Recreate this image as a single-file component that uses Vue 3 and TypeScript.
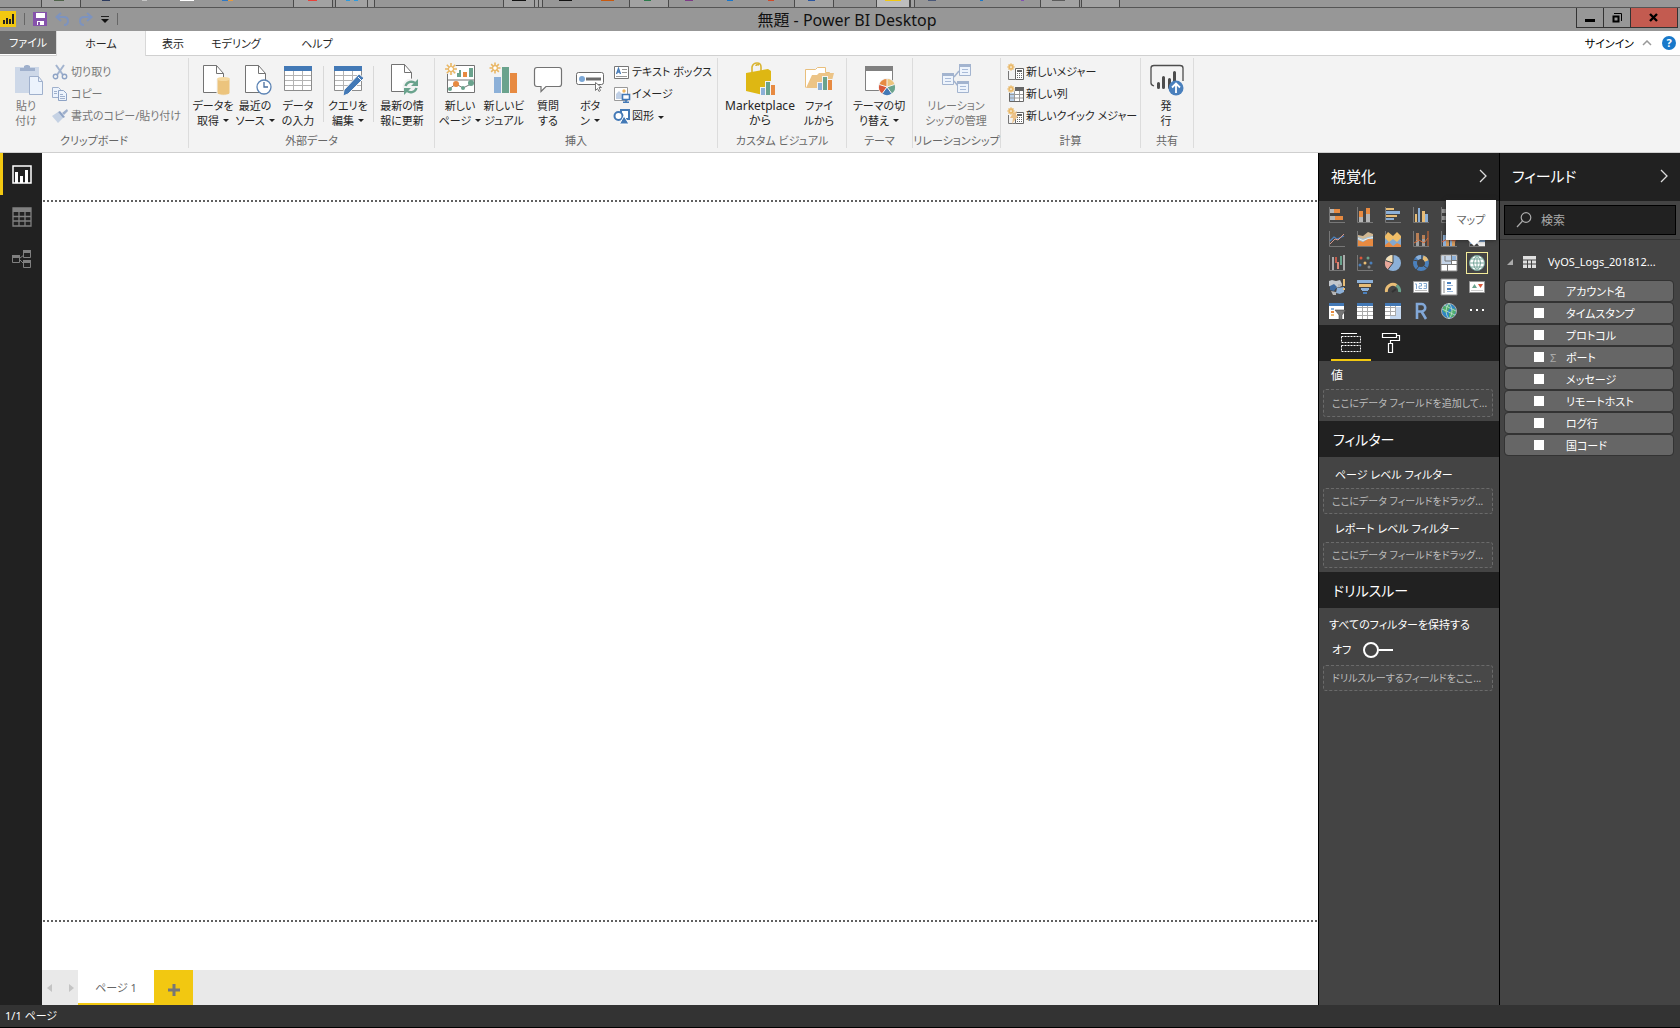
<script setup lang="ts">
import { ref } from 'vue'

interface BigCommand {
  icon: string
  lines: string[]
  width: number
  menu?: boolean
  disabled?: boolean
  divider?: boolean
  latin?: boolean
}
interface SmallCommand {
  icon: string
  label: string
  menu?: boolean
  disabled?: boolean
}
interface Group {
  label: string
  width: number
  big: BigCommand[]
  small: SmallCommand[]
}

const sun = (x: number, y: number, r: number) =>
  `<g stroke="#e9b765" stroke-width="1.6" transform="translate(${x} ${y})"><path d="M0 ${-r}V${r}M${-r} 0H${r}M${-r * 0.7} ${-r * 0.7}L${r * 0.7} ${r * 0.7}M${r * 0.7} ${-r * 0.7}L${-r * 0.7} ${r * 0.7}"/><circle r="${r * 0.42}" fill="#fff" stroke-width="1.2"/></g>`

const pageShape = (x: number, y: number) =>
  `<path d="M${x + 0.5} ${y + 0.5}h13l7 8v19h-20z" fill="#fff" stroke="#737373"/><path d="M${x + 13.5} ${y + 0.5}v8h7" fill="none" stroke="#737373"/>`

const tableShape =
  '<path d="M6.5 4.5h27v24h-27z" fill="#fff" stroke="#8c8c8c"/><path d="M6 4h28v5H6z" fill="#4379b6"/><path d="M7 13.5h26M7 18.5h26M7 23.5h26M15.5 9v19M24.5 9v19" stroke="#b3b3b3" fill="none"/>'

const relBox = (x: number, y: number) =>
  `<path d="M${x + 0.5} ${y + 0.5}h11v11h-11z" fill="#eef4fc" stroke="#a3b4cf"/><path d="M${x} ${y}h12v3h-12z" fill="#a3b4cf"/><path d="M${x + 3} ${y + 5.5}h6M${x + 3} ${y + 8.5}h6" stroke="#a9bbd8"/>`

const bigIcons: Record<string, string> = {
  paste:
    '<path d="M9 5h24v26H9z" fill="#cdd8e8"/><path d="M14 9V6h4V4l2-1h2l2 1v2h5v3z" fill="#9fb0cc"/><path d="M23.5 14.5h9l4 5v13h-13z" fill="#ecf3fc" stroke="#9fb0cc"/><path d="M32.500 14.500v5h4" fill="none" stroke="#9fb0cc"/>',
  getData:
    pageShape(10, 3) +
    '<path d="M24 17v14c0 3 13 3 13 0V17z" fill="#ecc47d" stroke="#f3f3f3"/><ellipse cx="30.500" cy="17" rx="6.500" ry="2" fill="#f5d9a0"/>',
  recent:
    pageShape(10, 3) +
    '<circle cx="29" cy="25" r="7" fill="#fff" stroke="#5c84b5" stroke-width="1.300"/><path d="M29 20v5h4" fill="none" stroke="#4a6f9e" stroke-width="1.300"/>',
  table: tableShape,
  query:
    tableShape +
    '<path d="M31 12l5 4-16 16-5 2 1-6z" fill="#4379b6" stroke="#f3f3f3"/><path d="M30 15l4 4" stroke="#fff"/>',
  refresh:
    pageShape(9, 2) +
    '<circle cx="29" cy="25" r="8.500" fill="#f3f3f3"/><path d="M23.500 24a6 6 0 0 1 10-2.500M34.500 26a6 6 0 0 1-10 2.500" fill="none" stroke="#6aa38d" stroke-width="2.400"/><path d="M36 17v7h-7zM22 33v-7h7z" fill="#6aa38d"/>',
  newPage:
    '<path d="M7.500 3.500h27v27h-27zM7.500 18h27" fill="#fff" stroke="#737373"/><path d="M17 11h3v4h-3zM29 6h4v9h-4z" fill="#6aa38d"/><path d="M23 10h4v5h-4z" fill="#e78a41"/><path d="M19 8h2v7h-2z" fill="#6aa38d"/><path d="M9 27l7-5 7 4 8-4" fill="none" stroke="#777"/><circle cx="16" cy="22" r="3" fill="#e78a41"/><circle cx="31" cy="21" r="3" fill="#6aa38d"/><circle cx="10" cy="27" r="2" fill="#6aa38d"/><circle cx="23" cy="26" r="2" fill="#6aa38d"/><circle cx="11" cy="7" r="6" fill="#f3f3f3"/>' +
    sun(11, 7, 6),
  newVisual:
    '<path d="M10 15h7v16h-7z" fill="#8cb0d8"/><path d="M18 5h7v26h-7z" fill="#6aa38d"/><path d="M26 11h7v20h-7z" fill="#e78a41"/>' +
    sun(11, 6, 5.5),
  ask: '<path d="M9 5.500h22q2.500 0 2.500 2.500v14q0 2.500-2.500 2.500H18l-5 5v-5H9q-2.500 0-2.500-2.500V8q0-2.500 2.500-2.500z" fill="#fff" stroke="#737373" stroke-width="1.200"/>',
  button:
    '<rect x="6.500" y="10.500" width="27" height="12" rx="2" fill="#fff" stroke="#6b6b6b"/><circle cx="12" cy="17" r="3" fill="#7ba7d6"/><path d="M16 15.500h15v3H16z" fill="#6b6b6b"/><path d="M25.500 20.500v8l2-2 1.500 3 1.500-1-1.500-3h2.500z" fill="#fff" stroke="#777"/>',
  market:
    '<path d="M12 10V5q1-4 5-4t4 4v4M16 4q0-2 3-1" fill="none" stroke="#d9b431" stroke-width="1.600"/><path d="M6 11l22-4 3 2v20l-8 4L6 29z" fill="#deb713"/><path d="M20 25h5v9h-5zM25 19h6v15h-6zM30 22h6v12h-6z" fill="#f3f3f3"/><path d="M21 26h4v7h-4z" fill="#8cb0d8"/><path d="M26 20h4v13h-4z" fill="#6aa38d"/><path d="M31 23h4v10h-4z" fill="#e78a41"/>',
  folder:
    '<path d="M6.500 25.500v-18h10l2-2h8v5h4v3" fill="#fff" stroke="#e9bf7c"/><path d="M7 26l6-13h5l2-2h15l-4 15z" fill="#ecc487"/><path d="M18 20h6v9h-6zM23 14h6v15h-6zM28 17h6v12h-6z" fill="#f3f3f3"/><path d="M19 21h4v7h-4z" fill="#8cb0d8"/><path d="M24 15h4v13h-4z" fill="#6aa38d"/><path d="M29 18h4v10h-4z" fill="#e78a41"/>',
  theme:
    '<path d="M6.500 4.500h27v24h-27z" fill="#fff" stroke="#808080"/><path d="M6 4h28v5H6z" fill="#808080"/><circle cx="28" cy="25" r="9" fill="#f3f3f3"/><path d="M28 25v-8a8 8 0 0 0-7.600 5.500z" fill="#e78a41"/><path d="M28 25v-8a8 8 0 0 1 7.600 5.500z" fill="#ecc47d"/><path d="M28 25l7.600-2.500A8 8 0 0 1 32.700 31.500z" fill="#6aa38d"/><path d="M28 25l4.700 6.500a8 8 0 0 1-9.400 0z" fill="#4379b6"/><path d="M28 25l-4.700 6.500A8 8 0 0 1 20.400 22.500z" fill="#d9583b"/><path d="M28 17v8l7.600-2.500M28 25l4.700 6.500M28 25l-4.700 6.500M28 25l-7.600-2.500" fill="none" stroke="#f3f3f3"/>',
  relations:
    '<path d="M18 15l5-6M18 19l4 5" stroke="#a3b4cf" stroke-width="1.500"/>' + relBox(6, 11) + relBox(23, 2) + relBox(21, 19),
  publish:
    '<path d="M8 24q-3-1-3-3V6q0-2.500 3-2.500h26q3 0 3 2.500v13" fill="none" stroke="#4d4d4d" stroke-width="1.300"/><path d="M12.500 21.500v4M17.500 15.500v10M23.500 17.500v8M28.500 10.500v10" stroke="#4d4d4d" stroke-width="3" stroke-linecap="round"/><circle cx="30" cy="26" r="7.500" fill="#4a80bd"/><path d="M30 31v-9M26 25.500l4-4 4 4" fill="none" stroke="#fff" stroke-width="1.800"/>',
}

const calcShape = '<path d="M1.500 8v8.500H8" fill="none" stroke="#777"/><path d="M8.500 5.500h8v11h-8z" fill="#fff" stroke="#666"/><path d="M10 7h5v2h-5zM10 10h1v1h-1zM12 10h1v1h-1zM14 10h1v1h-1zM10 12h1v1h-1zM12 12h1v1h-1zM14 12h1v1h-1zM10 14h1v1h-1zM12 14h1v1h-1zM14 14h1v1h-1z" fill="#666"/>'

const smallIcons: Record<string, string> = {
  cut: '<path d="M4 2l7 10M12 2L5 12" stroke="#a3b4cf" stroke-width="2"/><circle cx="3.500" cy="13.500" r="2.200" fill="none" stroke="#8ea3c5" stroke-width="1.400"/><circle cx="12.500" cy="13.500" r="2.200" fill="none" stroke="#8ea3c5" stroke-width="1.400"/>',
  copy: '<path d="M.5 2.500h6l2 2v8h-8z" fill="#ecf3fc" stroke="#9fb0cc"/><path d="M6.500 5.500h5l3 3v7h-8z" fill="#ecf3fc" stroke="#8ea3c5"/><path d="M2 6.500h3M2 8.500h3M8 9.500h3M8 11.500h5M8 13.500h5" stroke="#9fb0cc"/>',
  brush: '<path d="M0 9l6-4 5 6-5 5z" fill="#c5d2e4"/><path d="M6 5l2-1 5 6-2 1z" fill="#8ea3c5"/><path d="M10 6l5-4 1 2-4 4z" fill="#9fb0cc"/>',
  textBox: '<path d="M1.500 3.500h14v12h-14z" fill="#fff" stroke="#777"/><path d="M3.500 11l2-5.500 2 5.500M4.500 9h2" fill="none" stroke="#4379b6" stroke-width="1.300"/><path d="M9 6.500h5M9 9.500h5M3 13.500h11" stroke="#999"/>',
  image: '<path d="M1.500 2.500h13v13h-13z" fill="#fff" stroke="#999"/><circle cx="11" cy="6" r="1.700" fill="#ecb55e"/><path d="M3 14V9l3-3 3 3v5z" fill="#c0d0e6"/><path d="M9.500 9.500h7v5h-7z" fill="#fff" stroke="#4379b6" stroke-width="1.600"/><path d="M10 17.300h6M13 15v2" stroke="#4379b6" stroke-width="1.600"/>',
  shapes: '<path d="M8 3h8v9H8z" fill="#fff" stroke="#4379b6" stroke-width="2"/><circle cx="5.500" cy="9" r="4" fill="#fff" stroke="#4379b6" stroke-width="2"/><path d="M6.500 17l4.500-8 5 8z" fill="#4379b6" stroke="#fff"/>',
  measure: calcShape + sun(4, 4, 3.5),
  column: '<path d="M2.500 5.500h14v11h-14z" fill="#fff" stroke="#666"/><path d="M8 2h9v4H8z" fill="#666"/><path d="M3 8h4v8H3z" fill="#b9d0ea"/><path d="M7.500 6v10M12.500 6v10M3 9.500h13M3 13h13" stroke="#999"/><circle cx="4" cy="4" r="4" fill="#f3f3f3"/>' + sun(4, 4, 3.5),
  quick: calcShape + '<path d="M6 6l4-2-1 4 2 1-6 8 1-6H3z" fill="#ecc28a"/>' + sun(4, 4, 3.5),
}

const groups: Group[] = [
  {
    label: 'クリップボード', width: 189,
    big: [{ icon: 'paste', lines: ['貼り', '付け'], width: 46, disabled: true }],
    small: [
      { icon: 'cut', label: '切り取り', disabled: true },
      { icon: 'copy', label: 'コピー', disabled: true },
      { icon: 'brush', label: '書式のコピー/貼り付け', disabled: true },
    ],
  },
  {
    label: '外部データ', width: 246,
    big: [
      { icon: 'getData', lines: ['データを', '取得'], width: 42, menu: true },
      { icon: 'recent', lines: ['最近の', 'ソース'], width: 42, menu: true },
      { icon: 'table', lines: ['データ', 'の入力'], width: 44 },
      { icon: 'query', lines: ['クエリを', '編集'], width: 44, menu: true, divider: true },
      { icon: 'refresh', lines: ['最新の情', '報に更新'], width: 52, divider: true },
    ],
    small: [],
  },
  {
    label: '挿入', width: 283,
    big: [
      { icon: 'newPage', lines: ['新しい', 'ページ'], width: 44, menu: true },
      { icon: 'newVisual', lines: ['新しいビ', 'ジュアル'], width: 44 },
      { icon: 'ask', lines: ['質問', 'する'], width: 44 },
      { icon: 'button', lines: ['ボタ', 'ン'], width: 40, menu: true },
    ],
    small: [
      { icon: 'textBox', label: 'テキスト ボックス' },
      { icon: 'image', label: 'イメージ' },
      { icon: 'shapes', label: '図形', menu: true },
    ],
  },
  {
    label: 'カスタム ビジュアル', width: 129,
    big: [
      { icon: 'market', lines: ['Marketplace', 'から'], width: 78, latin: true },
      { icon: 'folder', lines: ['ファイ', 'ルから'], width: 40 },
    ],
    small: [],
  },
  { label: 'テーマ', width: 66, big: [{ icon: 'theme', lines: ['テーマの切', 'り替え'], width: 58, menu: true }], small: [] },
  { label: 'リレーションシップ', width: 88, big: [{ icon: 'relations', lines: ['リレーション', 'シップの管理'], width: 80, disabled: true }], small: [] },
  {
    label: '計算', width: 140, big: [],
    small: [
      { icon: 'measure', label: '新しいメジャー' },
      { icon: 'column', label: '新しい列' },
      { icon: 'quick', label: '新しいクイック メジャー' },
    ],
  },
  { label: '共有', width: 53, big: [{ icon: 'publish', lines: ['発', '行'], width: 44 }], small: [] },
]

const tabs = [
  { label: 'ファイル', width: 56, kind: 'file' },
  { label: 'ホーム', width: 90, kind: 'active' },
  { label: '表示', width: 54, kind: '' },
  { label: 'モデリング', width: 72, kind: '' },
  { label: 'ヘルプ', width: 90, kind: '' },
]

const axis = '<path d="M1.500 1v15.500H17" fill="none" stroke="#777"/>'
const sheet = '<path d="M1 1h16v16H1z" fill="#fff" stroke="#888"/>'
const grid = '<path d="M1 1h16v16H1z" fill="#fff"/><path d="M1 5.500h16M1 9.500h16M1 13.500h16M6.500 4v13M11.500 4v13" stroke="#aaa"/>'

const visuals: { name: string; art: string }[] = [
  { name: '積み上げ横棒グラフ', art: axis + '<path d="M2 3h4v4H2zM2 10h5v4H2z" fill="#b5b5b5"/><path d="M6 3h6v4H6zM7 10h8v4H7z" fill="#e78a41"/>' },
  { name: '積み上げ縦棒グラフ', art: axis + '<path d="M3 11h4v5H3zM10 8h4v8h-4z" fill="#b5b5b5"/><path d="M3 5h4v6H3zM10 2h4v6h-4z" fill="#e78a41"/>' },
  { name: '集合横棒グラフ', art: axis + '<path d="M2 2h8v2H2zM2 9h11v2H2z" fill="#e8bd76"/><path d="M2 5h14v3H2zM2 12h8v2H2z" fill="#8cb0d8"/>' },
  { name: '集合縦棒グラフ', art: axis + '<path d="M3 8h2v8H3zM10 5h3v11h-3z" fill="#e8bd76"/><path d="M6 2h2v14H6zM13 8h3v8h-3z" fill="#8cb0d8"/>' },
  { name: '100% 積み上げ横棒グラフ', art: axis + '<path d="M2 3h14v4H2zM2 10h14v4H2z" fill="#9a9a9a"/>' },
  { name: '100% 積み上げ縦棒グラフ', art: axis + '<path d="M4 2h4v14H4zM11 2h4v14h-4z" fill="#9a9a9a"/>' },
  { name: '折れ線グラフ', art: axis + '<path d="M2 11l4-4 3 2 7-3" fill="none" stroke="#4a7fbb" stroke-width="1.300"/><path d="M2 14l5-5 3 1 6-6" fill="none" stroke="#d9988a"/>' },
  { name: '面グラフ', art: axis + '<path d="M2 5l5 1 5-4 5 2v12H2z" fill="#d1b893"/><path d="M2 7l5 2 5-2 5-1v10H2z" fill="#9cc3e3"/><path d="M2 10l5 2 5-3 5 0v7H2z" fill="#e78a41"/><path d="M2 8.500l5 2 5-2 5-1" fill="none" stroke="#f7ebdb"/>' },
  { name: '積み上げ面グラフ', art: axis + '<path d="M1 6l3-4 5 4 4-4 4 4v11H1z" fill="#efbd68"/><path d="M1 8l4 4 4-3 4 3 4-4v9H1z" fill="#82a8d0"/><path d="M1 15l4-3 4 4 4-3 4 2v2H1z" fill="#e78a41"/>' },
  { name: '折れ線と積み上げ縦棒', art: axis + '<path d="M4 3h3v8H4zM10 5h3v6h-3z" fill="#b97f55"/><path d="M4 10h3v6H4zM10 9h3v7h-3z" fill="#a0a0a0"/><path d="M16 1v15M2 13l5-3 5 3 4-5" fill="none" stroke="#d96c35"/>' },
  { name: '折れ線と集合縦棒', art: axis + '<path d="M3 5h3v11H3zM10 8h2v8h-2z" fill="#8cb0d8"/><path d="M6 8h3v8H6zM12 4h3v12h-3z" fill="#d69b5e"/><path d="M2 12l5-3 9 2" fill="none" stroke="#d9583b"/>' },
  { name: 'リボン グラフ', art: axis + '<path d="M2 10h4l6 6h5V9h-4l-4 5H2z" fill="#7399c3"/><path d="M2 5h4l5 7h6v4h-6L6 9H2z" fill="#eee"/>' },
  { name: 'ウォーターフォール図', art: axis + '<path d="M4 3h2v13H4z" fill="#aaa"/><path d="M7 3h2v6H7z" fill="#c35a49"/><path d="M9 8h2v7H9z" fill="#d98a7c"/><path d="M12 2h2v9h-2z" fill="#6aa38d"/><path d="M15 1h2v15h-2z" fill="#aaa"/>' },
  { name: '散布図', art: axis + '<g fill="#d9583b"><circle cx="5" cy="4" r="1.500"/><circle cx="13" cy="13" r="1.500" fill="#888"/><circle cx="4" cy="11" r="1.500" fill="#4a7fbb"/><circle cx="9" cy="9" r="1.500" fill="#e8bd76"/><circle cx="12" cy="4" r="1.500" fill="#6aa38d"/><circle cx="15" cy="9" r="1.500" fill="#4a7fbb"/></g>' },
  { name: '円グラフ', art: '<circle cx="9" cy="9" r="8" fill="#8cb0d8"/><path d="M9 9V1a8 8 0 0 0-7.500 5.500z" fill="#f4dfb5"/><path d="M9 9L1.500 6.500A8 8 0 0 0 4 15.500z" fill="#e8a79a"/><path d="M9 1v8l-7.500-2.500M9 9l-5 6.500" fill="none" stroke="#444"/>' },
  { name: 'ドーナツ グラフ', art: '<circle cx="9" cy="9" r="6" fill="none" stroke="#4a80bd" stroke-width="4"/><path d="M9 3a6 6 0 0 0-4 1.500" fill="none" stroke="#8cb0d8" stroke-width="4"/><path d="M11 3.400a6 6 0 0 1 3.600 3.600" fill="none" stroke="#e8bd76" stroke-width="4"/><path d="M10 0v6M1 6l5 1M4 16l3-4M12 12l4 3" stroke="#444"/>' },
  { name: 'ツリーマップ', art: sheet + '<path d="M2 2h9v8H2z" fill="#c4d4e8"/><path d="M12 2h4v4h-4z" fill="#8cb0d8"/><path d="M11.500 1v10M1 10.500h16M7.500 10.500V17M12 6.500h5M5 2v5h6" stroke="#777" fill="none"/>' },
  { name: 'マップ', art: '<circle cx="9" cy="9" r="7.500" fill="#fff" stroke="#77a69b"/><path d="M1.500 9h15M3 5h12M3 13h12M9 1v16M9 1Q2 9 9 17M9 1q7 8 0 16" fill="none" stroke="#77a69b"/>' },
  { name: '塗り分け地図', art: '<path d="M1 3l3-1 4 1 4-1 2 4-2 3-5 1-6-2z" fill="#c4c8cd"/><path d="M2 8l4-2 3 3-3 4-4-1z" fill="#3f6a9f"/><path d="M9 10l7-1v5l-4 2-4-1z" fill="#8cb0d8"/><path d="M3 13l5 1v3H5zM10 6l4 0v2l-4 1z" fill="#b5b5b5"/><path d="M16 1v7M16 10v2" stroke="#e8bd76" stroke-width="2"/>' },
  { name: 'じょうご', art: '<path d="M1 2h16v3H1zM5 10h8v2H5z" fill="#8cb0d8"/><path d="M3 6h12v3H3z" fill="#e8bd76"/><path d="M6 12h6v1H6z" fill="#8cb0d8"/><path d="M7 14h4v2H7z" fill="#4a80bd"/>' },
  { name: 'ゲージ', art: '<path d="M2.500 14a6.500 6.500 0 0 1 10-6.500" fill="none" stroke="#e8bd76" stroke-width="3"/><path d="M12.500 7.500a6.500 6.500 0 0 1 3 6.500" fill="none" stroke="#6aa38d" stroke-width="3"/><path d="M8 14l4-3" stroke="#333" stroke-width="2"/>' },
  { name: 'カード', art: '<path d="M1.500 3.500h15v11h-15z" fill="#fff" stroke="#999"/><path d="M3 6h1.500v5M7 5.500h2.500v2.500H7v2.500h3M11.500 5.500h3v5h-3M12 8h2.500" fill="none" stroke="#82a8d0"/><path d="M3 12.500h12" stroke="#bbb"/>' },
  { name: '複数の行カード', art: sheet + '<path d="M3 3h2v12H3z" fill="#c5c5c5"/><path d="M7 4h4v2H7zM7 10h4v2H7z" fill="#4a80bd"/><path d="M7 7.500h6M7 13.500h6" stroke="#9cb9da"/>' },
  { name: 'KPI', art: '<path d="M1.500 3.500h15v11h-15z" fill="#fff" stroke="#999"/><path d="M4 10l2.500-4L9 10z" fill="#6aa38d"/><path d="M10 6h5l-2.500 4z" fill="#d9583b"/><path d="M3 12.500h12" stroke="#ccc"/>' },
  { name: 'スライサー', art: '<path d="M1 1h15v16H1z" fill="#fff"/><path d="M1 1h15v3H1z" fill="#4379b6"/><path d="M3 6h3v2H3z" fill="#8cb0d8"/><path d="M3 9h3v2H3z" fill="#e78a41"/><path d="M3 12h3v2H3z" fill="#f0c080"/><path d="M7 8h11l-4 5v5l-3-1v-4z" fill="#777" stroke="#444" stroke-width=".6"/>' },
  { name: 'テーブル', art: grid + '<path d="M1 1h16v3H1z" fill="#4379b6"/>' },
  { name: 'マトリックス', art: grid + '<path d="M12 5h5v12h-5zM6 14h6v3H6z" fill="#c4d7ee"/><path d="M1 1h16v3H1z" fill="#4379b6"/>' },
  { name: 'R スクリプト ビジュアル', art: '<path d="M5 17V2h4.500a3.700 3.700 0 0 1 0 7.500H5M9.500 9.500L14 17" fill="none" stroke="#82a8d8" stroke-width="2.600"/>' },
  { name: 'ArcGIS Maps', art: '<circle cx="9" cy="9" r="7.500" fill="#2f86c4" stroke="#aaa"/><path d="M3 5l6-3 1 4-4 5-3-2zM9 11l5-5 2 3-3 6-4 0z" fill="#4fae6a"/><path d="M2 7l13 6M4 3l12 6M9 1Q3 9 9 17M9 1q6 8 0 16" fill="none" stroke="#bfe0d0" stroke-width=".8"/>' },
  { name: 'その他のオプション', art: '<path d="M2 7h2v2H2zM8 7h2v2H8zM14 7h2v2h-2z" fill="#fff"/>' },
]

const fields = ['アカウント名', 'タイムスタンプ', 'プロトコル', 'ポート', 'メッセージ', 'リモートホスト', 'ログ行', '国コード']
const numeric = 'ポート'
const picked = ref<string[]>([])
const keepFilters = ref(false)
const query = ref('')

// Slivers of the desktop taskbar behind the window: frames, then icon edges.
const frames = [[41, 39], [293, 39], [335, 35], [367, 7], [503, 31], [534, 4], [538, 4], [629, 39], [794, 39], [910, 4], [1040, 39], [1081, 38]]
const bits: [number, number, string][] = [
  [54, 10, '#50634b'], [102, 8, '#2c3a5e'], [142, 5, '#c5c5c5'], [180, 14, '#fff'], [222, 6, '#2f78c4'], [228, 5, '#e89a3c'],
  [308, 9, '#e8423a'], [346, 4, '#2c9be0'], [354, 4, '#2c9be0'], [512, 14, '#111'], [559, 13, '#111'], [601, 13, '#c8590f'],
  [644, 7, '#2b7a4b'], [685, 8, '#7d3b86'], [727, 6, '#1876cc'], [768, 6, '#d04a2b'], [808, 7, '#2a55a0'],
  [885, 16, '#f2c811'], [928, 8, '#4a5878'], [980, 3, '#1b78c8'], [1021, 3, '#8250b4'], [1052, 13, '#5c5c5c'],
]
</script>

<template>
  <div class="app">
    <div class="desktop-strip" aria-hidden="true">
      <svg width="1200" height="8">
        <g fill="#a2a2a2" stroke="#4a4a4a">
          <rect v-for="f in frames" :key="f[0]" :x="f[0] + 0.5" y="-2" :width="f[1]" height="9.5" />
          <rect x="876.5" y="-2" width="33" height="9.5" fill="#bdbdbd" />
        </g>
        <rect v-for="b in bits" :key="b[0]" :x="b[0]" y="0" :width="b[1]" height="1" :fill="b[2]" />
      </svg>
    </div>

    <header class="titlebar">
      <div class="quick">
        <svg class="logo" width="16" height="16" viewBox="0 0 16 16"><path d="M0 0h16v16H0z" fill="#f2c811" /><path d="M4 9v4M7 7v6M10 8v5M13 3v10" stroke="#222" stroke-width="2" /></svg>
        <i></i>
        <button class="plain" aria-label="保存"><svg width="14" height="14" viewBox="0 0 14 14"><path d="M0 0h14v14H0z" fill="#8552ab" /><path d="M3 1h9v5H3zM4 9h7v4H4z" fill="#fff" /><path d="M5 10h2v3H5z" fill="#8552ab" /></svg></button>
        <button class="plain" aria-label="元に戻す"><svg width="15" height="14" viewBox="0 0 15 14"><path d="M6 1L1.500 5 6 9M2 5h7q4 0 4 4t-4 4" fill="none" stroke="#7d93be" stroke-width="2" /></svg></button>
        <button class="plain" aria-label="やり直し"><svg width="15" height="14" viewBox="0 0 15 14"><path d="M9 1l4.500 4L9 9M13 5H6q-4 0-4 4t4 4" fill="none" stroke="#7d93be" stroke-width="2" /></svg></button>
        <button class="plain" aria-label="カスタマイズ"><svg width="8" height="10" viewBox="0 0 8 10"><path d="M0 2h8v1H0z" fill="#222" /><path d="M0 5h8L4 9z" fill="#111" /></svg></button>
        <i></i>
      </div>
      <h1>無題 - Power BI Desktop</h1>
      <div class="window-buttons">
        <button aria-label="最小化"><svg width="12" height="12"><path d="M1 7h10v3H1z" /></svg></button>
        <button aria-label="元のサイズ"><svg width="12" height="12"><path d="M2.500 4.500h5v5h-5z" fill="none" stroke="#000" stroke-width="2" /><path d="M3 1.500h7.500V9" fill="none" stroke="#000" /></svg></button>
        <button class="close" aria-label="閉じる"><svg width="12" height="12"><path d="M2 2l7 7M9 2L2 9" stroke="#000" stroke-width="2.400" /></svg></button>
      </div>
    </header>

    <nav class="tabs">
      <button v-for="t in tabs" :key="t.label" :class="['tab', t.kind]" :style="{ width: t.width + 'px' }">{{ t.label }}</button>
      <div class="account">
        <button class="plain">サインイン</button>
        <svg width="10" height="6" viewBox="0 0 10 6"><path d="M1 5l4-4 4 4" fill="none" stroke="#999" stroke-width="1.500" /></svg>
        <button class="help" aria-label="ヘルプを表示">?</button>
      </div>
    </nav>

    <section class="ribbon">
      <div v-for="g in groups" :key="g.label" class="group" :style="{ width: g.width + 'px' }">
        <div class="commands">
          <template v-for="c in g.big" :key="c.icon">
            <i v-if="c.divider" class="divider"></i>
            <button :class="['big', { latin: c.latin }]" :disabled="c.disabled" :style="{ width: c.width + 'px' }">
              <svg width="40" height="34" viewBox="0 0 40 34" v-html="bigIcons[c.icon]"></svg>
              <span>{{ c.lines[0] }}</span>
              <span>{{ c.lines[1] }}<b v-if="c.menu" class="caret"></b></span>
            </button>
          </template>
          <div v-if="g.small.length" class="stack">
            <button v-for="s in g.small" :key="s.icon" class="small" :disabled="s.disabled">
              <svg width="18" height="18" viewBox="0 0 18 18" v-html="smallIcons[s.icon]"></svg>
              <span>{{ s.label }}</span><b v-if="s.menu" class="caret"></b>
            </button>
          </div>
        </div>
        <div class="group-label">{{ g.label }}</div>
      </div>
    </section>

    <main class="workspace">
      <nav class="views">
        <button class="on" aria-label="レポート"><svg width="20" height="20" viewBox="0 0 20 20"><path d="M1 1h18v17H1z" fill="none" stroke="#fff" stroke-width="1.500" /><path d="M3 7h3v11H3zM8 11h3v7H8zM13 5h3v13h-3z" fill="#fff" /></svg></button>
        <button aria-label="データ"><svg width="20" height="20" viewBox="0 0 20 20"><path d="M1 1h18v18H1zM1 9.500h18M1 14h18M7 5v14M13 5v14" fill="none" stroke="#808080" stroke-width="1.300" /><path d="M1 1h18v4H1z" fill="#808080" /></svg></button>
        <button aria-label="リレーションシップ"><svg width="20" height="20" viewBox="0 0 20 20"><path d="M.5 7.500h7v6h-7zM11.500 2.500h7v6h-7zM11.500 12.500h7v6h-7zM8 9l4-3M8 11l4 4" fill="none" stroke="#808080" /><path d="M0 6h8v3H0zM11 1h8v3h-8zM11 11h8v3h-8z" fill="#808080" /></svg></button>
      </nav>

      <div class="report">
        <div class="canvas"><div class="page"></div></div>
        <div class="page-tabs">
          <div class="arrows">
            <svg width="5" height="8"><path d="M5 0v8L0 4z" fill="#c4c4c4" /></svg>
            <svg width="5" height="8"><path d="M0 0v8l5-4z" fill="#c4c4c4" /></svg>
          </div>
          <button class="page-tab">ページ 1</button>
          <button class="add" aria-label="新しいページ"><svg width="12" height="12"><path d="M4.500 0h3v12h-3zM0 4.500h12v3H0z" fill="#777" /></svg></button>
        </div>
      </div>

      <aside class="pane">
        <h2 class="pane-head">視覚化<button class="plain" aria-label="視覚化を折りたたむ"><svg width="8" height="14"><path d="M1 1l6 6-6 6" fill="none" stroke="#ddd" stroke-width="1.300" /></svg></button></h2>
        <div class="gallery">
          <button v-for="v in visuals" :key="v.name" :class="{ hovered: v.name === 'マップ' }" :aria-label="v.name">
            <svg width="18" height="18" viewBox="0 0 18 18" v-html="v.art"></svg>
            <span v-if="v.name === 'マップ'" class="tooltip" role="tooltip">マップ</span>
          </button>
        </div>
        <div class="modes">
          <button class="on" aria-label="フィールド"><svg width="22" height="22" viewBox="0 0 22 22"><path d="M1 1.500h16" stroke="#fff" /><path d="M1.500 4.500h19v6h-19zM1.500 13.500h19v6h-19z" fill="none" stroke="#fff" stroke-dasharray="2 1" /></svg></button>
          <button aria-label="書式"><svg width="22" height="22" viewBox="0 0 22 22"><path d="M2.500 1.500h14v4h-14zM16.500 3.500h3v5h-9v3M8.500 11.500h4v9h-4z" fill="none" stroke="#fff" stroke-width="1.200" /></svg></button>
        </div>
        <div class="values">
          <h4>値</h4>
          <div class="well tall">ここにデータ フィールドを追加して...</div>
        </div>
        <h3>フィルター</h3>
        <div class="filters">
          <h4>ページ レベル フィルター</h4>
          <div class="well">ここにデータ フィールドをドラッグ...</div>
          <h4>レポート レベル フィルター</h4>
          <div class="well">ここにデータ フィールドをドラッグ...</div>
        </div>
        <h3>ドリルスルー</h3>
        <div class="drill">
          <h4>すべてのフィルターを保持する</h4>
          <label class="switch">オフ<input v-model="keepFilters" type="checkbox" role="switch" /></label>
          <div class="well">ドリルスルーするフィールドをここ...</div>
        </div>
      </aside>

      <aside class="pane">
        <h2 class="pane-head">フィールド<button class="plain" aria-label="フィールドを折りたたむ"><svg width="8" height="14"><path d="M1 1l6 6-6 6" fill="none" stroke="#ddd" stroke-width="1.300" /></svg></button></h2>
        <div class="search-row">
          <label class="search">
            <svg width="16" height="16" viewBox="0 0 16 16"><circle cx="10" cy="5.500" r="4.800" fill="none" stroke="#aaa" stroke-width="1.200" /><path d="M6.500 9L1 15" stroke="#aaa" stroke-width="1.200" /></svg>
            <input v-model="query" type="text" placeholder="検索" aria-label="検索" />
          </label>
        </div>
        <div class="table-name">
          <svg width="6" height="6"><path d="M6 0v6H0z" fill="#aaa" /></svg>
          <svg width="13" height="12"><path d="M0 0h13v12H0z" fill="#e0e0e0" /><path d="M0 4h13M0 8h13M4.500 4v8M8.500 4v8" stroke="#444" /></svg>
          <span>VyOS_Logs_201812...</span>
        </div>
        <ul class="fields">
          <li v-for="f in fields" :key="f">
            <label><input v-model="picked" type="checkbox" :value="f" /><i>{{ f === numeric ? 'Σ' : '' }}</i>{{ f }}</label>
          </li>
        </ul>
      </aside>
    </main>

    <footer class="status">1/1 ページ</footer>
  </div>
</template>

<style>
body {
  background: #000;
}
</style>

<style scoped>
* {
  box-sizing: border-box;
}
.app {
  display: flex;
  flex-direction: column;
  min-height: 100vh;
  font: 11px/15px "Noto Sans", "Noto Sans CJK JP", sans-serif;
  font-feature-settings: "palt";
  color: #262626;
  white-space: nowrap;
}
button,
input {
  font: inherit;
  font-feature-settings: inherit;
  color: inherit;
}
button {
  padding: 0;
  border: 0;
  background: none;
}
svg {
  display: block;
  flex: none;
}
i {
  font-style: normal;
}
h1,
h2,
h3,
h4,
ul {
  margin: 0;
  padding: 0;
  font-weight: 400;
  list-style: none;
}
.plain {
  display: flex;
}
.desktop-strip {
  height: 8px;
  overflow: hidden;
  background: #979797;
  border-bottom: 1px solid #555;
}
.titlebar {
  display: grid;
  grid-template-columns: 1fr auto 1fr;
  height: 23px;
  background: #979797;
}
.titlebar h1 {
  padding-left: 14px;
  font-size: 16px;
  line-height: 24px;
  color: #111;
}
.quick {
  display: flex;
  align-items: center;
  gap: 8px;
  height: 22px;
}
.quick i {
  width: 1px;
  height: 12px;
  background: #666;
}
.window-buttons {
  display: flex;
  justify-self: end;
  height: 20px;
  margin-right: 2px;
  border: 1px solid #333;
  border-top: 0;
}
.window-buttons button {
  display: flex;
  align-items: center;
  justify-content: center;
  width: 27px;
  border-right: 1px solid #333;
}
.window-buttons .close {
  width: 46px;
  border-right: 0;
  background: #c35b50;
}
.tabs {
  display: flex;
  height: 25px;
  background: #fff;
  border-bottom: 1px solid #d0d0d0;
}
.tab {
  height: 24px;
}
.tab.file {
  height: 23px;
  background: #6b6b6b;
  color: #fff;
}
.tab.active {
  height: 25px;
  background: #f3f3f3;
  border: solid #d8d8d8;
  border-width: 0 1px;
}
.account {
  display: flex;
  align-items: center;
  gap: 8px;
  margin-left: auto;
  padding: 0 4px 0 0;
  color: #000;
}
.help {
  width: 14px;
  height: 14px;
  margin-left: 2px;
  border-radius: 50%;
  background: #1979ca;
  color: #fff;
  font-weight: 700;
  line-height: 14px;
}
.ribbon {
  display: flex;
  height: 97px;
  padding: 2px 0 4px;
  background: #f3f3f3;
  border-bottom: 1px solid #cfcfcf;
}
.group {
  display: flex;
  flex-direction: column;
  flex: none;
  border-right: 1px solid #dcdcdc;
}
.commands {
  display: flex;
  height: 76px;
  padding: 4px 0 0 3px;
}
.divider {
  width: 1px;
  height: 56px;
  margin: 4px 2px 0 3px;
  background: #d8d8d8;
}
.big {
  display: flex;
  flex-direction: column;
  align-items: center;
  flex: none;
  height: 66px;
}
.big.latin {
  font-size: 12px;
}
.big svg {
  margin-bottom: 2px;
}
.big span {
  display: flex;
  align-items: center;
}
.big:disabled,
.small:disabled {
  color: #777;
}
.caret {
  width: 0;
  border: 3px solid transparent;
  border-top-color: #222;
  border-bottom: 0;
  margin-left: 4px;
}
.stack {
  display: flex;
  flex-direction: column;
  padding-left: 3px;
}
.small {
  display: flex;
  align-items: center;
  height: 22px;
}
.small svg {
  margin: 0 1px 3px 0;
}
.small span {
  padding-bottom: 4px;
}
.group-label {
  text-align: center;
  color: #666;
}
.workspace {
  display: flex;
  flex: 1;
}
.views {
  display: flex;
  flex-direction: column;
  width: 42px;
  background: #212121;
}
.views button {
  display: flex;
  align-items: center;
  height: 42px;
  padding: 2px 0 0 9px;
  border-left: 3px solid transparent;
}
.views .on {
  border-left-color: #f2c811;
}
.report {
  display: flex;
  flex-direction: column;
  flex: 1;
}
.canvas {
  display: flex;
  flex: 1;
  padding: 47px 0 48px 1px;
  background: #fff;
}
.page {
  flex: 1;
  background:
    repeating-linear-gradient(90deg, #606060 0 2px, transparent 2px 4px) top / 100% 2px no-repeat,
    repeating-linear-gradient(90deg, #606060 0 2px, transparent 2px 4px) bottom / 100% 2px no-repeat;
}
.page-tabs {
  display: flex;
  height: 35px;
  background: #e9e9e9;
}
.arrows {
  display: flex;
  align-items: center;
  justify-content: space-between;
  width: 36px;
  padding: 0 4px 0 5px;
}
.page-tab {
  width: 76px;
  padding-top: 2px;
  border-bottom: 2px solid #f2c811;
  background: #fff;
  color: #666;
}
.add {
  display: flex;
  align-items: center;
  justify-content: center;
  width: 39px;
  padding-top: 4px;
  background: #f2c811;
}
.pane {
  width: 181px;
  border-left: 1px solid #000;
  background: #444;
  color: #fff;
}
.pane-head {
  display: flex;
  align-items: center;
  justify-content: space-between;
  height: 48px;
  padding: 0 12px 2px;
  background: #212121;
  font-size: 15px;
}
.gallery {
  display: grid;
  grid-template-columns: repeat(6, 28px);
  grid-auto-rows: 24px;
  padding: 2px 4px;
}
.gallery button {
  position: relative;
  display: flex;
  align-items: center;
  justify-content: center;
}
.gallery .hovered::before {
  content: "";
  position: absolute;
  inset: 2px 4px;
  outline: 1px solid #f3ec9a;
}
.tooltip {
  position: absolute;
  right: -5px;
  bottom: 35px;
  width: 50px;
  height: 40px;
  background: #fff;
  box-shadow: 0 0 4px #222;
  color: #666;
  line-height: 40px;
}
.tooltip::after {
  content: "";
  position: absolute;
  top: 40px;
  left: 22px;
  border: 6px solid transparent;
  border-top-color: #fff;
  border-bottom: 0;
}
.modes {
  display: flex;
  height: 36px;
  padding-left: 12px;
  background: #212121;
}
.modes button {
  display: flex;
  align-items: center;
  justify-content: center;
  width: 40px;
  padding-top: 2px;
  border-bottom: 2px solid transparent;
}
.modes .on {
  border-bottom-color: #f2c811;
}
.pane h3 {
  height: 36px;
  padding-left: 14px;
  background: #212121;
  font-size: 14px;
  line-height: 38px;
}
.pane h4 {
  height: 28px;
  padding-left: 12px;
  font-size: 11px;
  line-height: 30px;
}
.well {
  height: 26px;
  padding-left: 8px;
  overflow: hidden;
  border: 1px dashed #6a6a6a;
  border-radius: 3px;
  background: #484848;
  color: #bdbdbd;
  font-size: 10px;
  line-height: 25px;
}
.well.tall {
  height: 28px;
  line-height: 27px;
}
.values {
  height: 60px;
  padding: 0 6px 0 4px;
}
.values h4 {
  padding-left: 8px;
  font-size: 12px;
}
.filters {
  height: 115px;
  padding: 3px 6px 0 4px;
}
.drill {
  padding: 2px 6px 0 4px;
}
.drill h4 {
  padding-left: 6px;
}
.switch {
  display: flex;
  align-items: center;
  gap: 12px;
  height: 23px;
  margin-bottom: 4px;
  padding-left: 9px;
}
.switch input {
  display: flex;
  align-items: center;
  width: 30px;
  height: 12px;
  margin: 0;
  appearance: none;
}
.switch input::before {
  content: "";
  width: 12px;
  height: 12px;
  border: 2px solid #fff;
  border-radius: 50%;
}
.switch input::after {
  content: "";
  flex: 1;
  height: 2px;
  background: #fff;
}
.search-row {
  padding: 4px;
  border-bottom: 1px solid #333;
}
.search {
  display: flex;
  align-items: center;
  gap: 9px;
  height: 30px;
  padding-left: 11px;
  border: 1px solid #000;
  background: #212121;
}
.search input {
  width: 100px;
  border: 0;
  padding: 0;
  outline: 0;
  background: none;
  font-size: 12px;
}
.search input::placeholder {
  color: #aaa;
}
.table-name {
  display: flex;
  align-items: center;
  height: 41px;
  padding: 2px 0 0 7px;
}
.table-name svg + svg {
  margin: 0 12px 0 10px;
}
.fields {
  padding: 0 7px 0 5px;
}
.fields li {
  height: 22px;
}
.fields label {
  display: flex;
  align-items: center;
  height: 20px;
  padding-left: 29px;
  border-radius: 3px;
  outline: 1px solid #333;
  background: #666;
}
.fields input {
  width: 10px;
  height: 10px;
  margin: 0;
  appearance: none;
  background: #fff;
}
.fields i {
  width: 22px;
  padding-left: 6px;
  color: #aaa;
}
.fields input:checked {
  background: #f2c811;
}
.status {
  height: 23px;
  padding-left: 5px;
  border-bottom: 1px solid #000;
  background: #333;
  color: #fff;
  line-height: 21px;
}
</style>
